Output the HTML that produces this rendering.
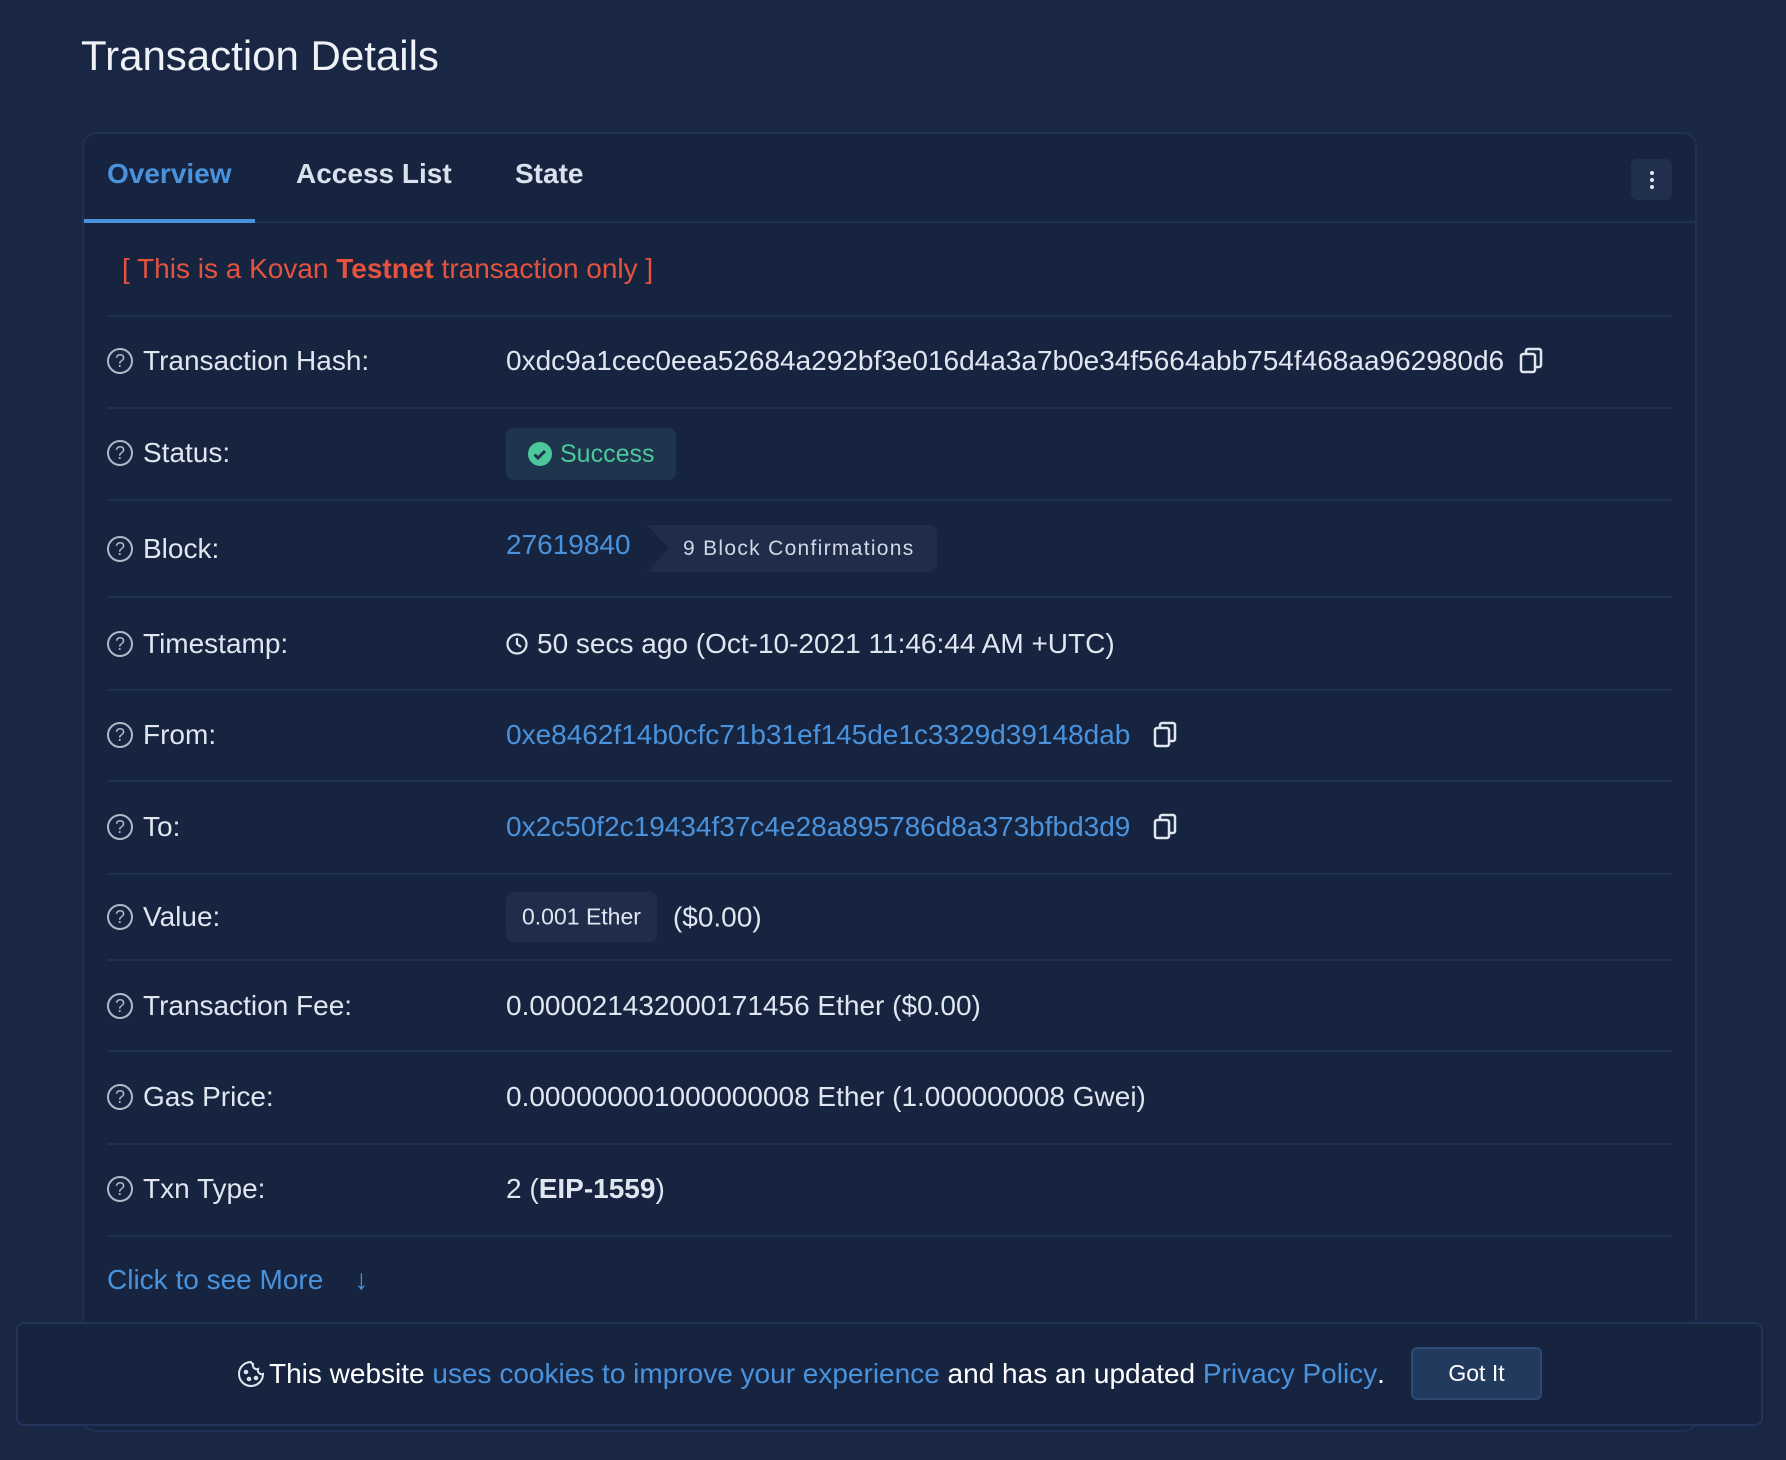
<!DOCTYPE html>
<html><head><meta charset="utf-8"><style>
*{margin:0;padding:0;box-sizing:border-box}
body{width:1786px;height:1460px;background:#1a2744;font-family:"Liberation Sans",sans-serif;color:#dfe6ef;position:relative;overflow:hidden}
.a{position:absolute;white-space:nowrap}
h1{position:absolute;left:81px;top:32px;font-size:42px;font-weight:400;color:#eef2f7}
.card{position:absolute;left:82px;top:132px;width:1615px;height:1300px;background:#162440;border:2px solid #1f3152;border-radius:14px}
.tab{position:absolute;top:158px;font-size:28px;font-weight:700;color:#d8e1ec}
.sep{position:absolute;left:107px;width:1565px;height:2px;background:#1f3152}
.lbl{position:absolute;left:107px;font-size:28px;color:#dfe6ef;display:flex;align-items:center;transform:translateY(-50%)}
.q{width:26px;height:26px;border:2px solid #aeb9c8;border-radius:50%;font-size:18px;line-height:22px;text-align:center;color:#aeb9c8;margin-right:10px}
.val{position:absolute;left:506px;font-size:28px;transform:translateY(-50%);display:flex;align-items:center}
.lk{color:#4a93dc}
.badge{background:#1f2f4d;border-radius:8px}
.cp{margin-left:14px}
</style></head><body>
<h1>Transaction Details</h1>
<div class="card"></div>
<div class="tab" style="left:107px;color:#4a93dc">Overview</div>
<div class="tab" style="left:296px">Access List</div>
<div class="tab" style="left:515px">State</div>
<div class="a" style="left:84px;top:221px;width:1611px;height:2px;background:#1f3152"></div>
<div class="a" style="left:84px;top:219px;width:171px;height:4px;background:#4a93dc"></div>
<div class="a" style="left:1631px;top:159px;width:41px;height:41px;background:#1f2f4d;border-radius:6px;display:flex;flex-direction:column;align-items:center;justify-content:center;gap:3px"><i style="width:4px;height:4px;background:#dfe6ef;border-radius:50%"></i><i style="width:4px;height:4px;background:#dfe6ef;border-radius:50%"></i><i style="width:4px;height:4px;background:#dfe6ef;border-radius:50%"></i></div>
<div class="a" style="left:122px;top:253px;font-size:28px;color:#e5533f">[ This is a Kovan <b>Testnet</b> transaction only ]</div>
<div class="sep" style="top:315px"></div><div class="sep" style="top:407px"></div><div class="sep" style="top:499px"></div><div class="sep" style="top:596px"></div><div class="sep" style="top:689px"></div><div class="sep" style="top:780px"></div><div class="sep" style="top:873px"></div><div class="sep" style="top:959px"></div><div class="sep" style="top:1050px"></div><div class="sep" style="top:1143px"></div><div class="sep" style="top:1235px"></div>

<div class="lbl" style="top:361px"><span class="q">?</span>Transaction Hash:</div>
<div class="val" style="top:361px">0xdc9a1cec0eea52684a292bf3e016d4a3a7b0e34f5664abb754f468aa962980d6<svg class="cp" width="26" height="28" viewBox="0 0 26 28" fill="none" stroke="#dfe6ef" stroke-width="2.5"><rect x="3" y="7" width="14" height="18" rx="2"/><path d="M8 7V4a2 2 0 0 1 2-2h11a2 2 0 0 1 2 2v14a2 2 0 0 1-2 2h-4"/></svg></div>

<div class="lbl" style="top:453px"><span class="q">?</span>Status:</div>
<div class="val badge" style="top:454px;height:52px;padding:0 22px;background:#1f344d;color:#4cc99a;font-size:25px"><svg width="24" height="24" viewBox="0 0 24 24" style="margin-right:8px"><circle cx="12" cy="12" r="12" fill="#4cc99a"/><path d="M6.5 12.5l3.5 3.5 7-7" stroke="#1f344d" stroke-width="3" fill="none"/></svg>Success</div>

<div class="lbl" style="top:549px"><span class="q">?</span>Block:</div>
<div class="val lk" style="top:545px">27619840</div>
<div class="a" style="left:647px;top:525px;width:290px;height:47px;background:#1f2d4a;border-radius:0 8px 8px 0;clip-path:polygon(0 0,100% 0,100% 100%,0 100%,22px 50%);font-size:21px;letter-spacing:1.3px;color:#cfd8e4;line-height:47px;padding-left:36px">9 Block Confirmations</div>

<div class="lbl" style="top:644px"><span class="q">?</span>Timestamp:</div>
<div class="val" style="top:644px"><svg width="22" height="22" viewBox="0 0 22 22" fill="none" stroke="#dfe6ef" stroke-width="2.2" style="margin-right:9px"><circle cx="11" cy="11" r="9.5"/><path d="M11 5v6l4 3"/></svg>50 secs ago (Oct-10-2021 11:46:44 AM +UTC)</div>

<div class="lbl" style="top:735px"><span class="q">?</span>From:</div>
<div class="val" style="top:735px"><span class="lk">0xe8462f14b0cfc71b31ef145de1c3329d39148dab</span><svg class="cp" style="margin-left:22px" width="26" height="28" viewBox="0 0 26 28" fill="none" stroke="#dfe6ef" stroke-width="2.5"><rect x="3" y="7" width="14" height="18" rx="2"/><path d="M8 7V4a2 2 0 0 1 2-2h11a2 2 0 0 1 2 2v14a2 2 0 0 1-2 2h-4"/></svg></div>

<div class="lbl" style="top:827px"><span class="q">?</span>To:</div>
<div class="val" style="top:827px"><span class="lk">0x2c50f2c19434f37c4e28a895786d8a373bfbd3d9</span><svg class="cp" style="margin-left:22px" width="26" height="28" viewBox="0 0 26 28" fill="none" stroke="#dfe6ef" stroke-width="2.5"><rect x="3" y="7" width="14" height="18" rx="2"/><path d="M8 7V4a2 2 0 0 1 2-2h11a2 2 0 0 1 2 2v14a2 2 0 0 1-2 2h-4"/></svg></div>

<div class="lbl" style="top:917px"><span class="q">?</span>Value:</div>
<div class="val" style="top:917px"><span class="badge" style="font-size:23px;padding:12px 16px;margin-right:16px;background:#1f2d4a">0.001 Ether</span>($0.00)</div>

<div class="lbl" style="top:1006px"><span class="q">?</span>Transaction Fee:</div>
<div class="val" style="top:1006px">0.000021432000171456 Ether ($0.00)</div>

<div class="lbl" style="top:1097px"><span class="q">?</span>Gas Price:</div>
<div class="val" style="top:1097px">0.000000001000000008 Ether (1.000000008 Gwei)</div>

<div class="lbl" style="top:1189px"><span class="q">?</span>Txn Type:</div>
<div class="val" style="top:1189px">2 (<b>EIP-1559</b>)</div>

<div class="a lk" style="left:107px;top:1264px;font-size:28px">Click to see More &nbsp;&nbsp;&nbsp;↓</div>

<div class="a" style="left:16px;top:1322px;width:1747px;height:104px;background:#162440;border:2px solid #22345a;border-radius:8px"></div>
<div class="a" style="left:237px;top:1358px;font-size:28px;color:#fff;display:flex;align-items:center"><svg width="28" height="28" viewBox="0 0 28 28" fill="none" stroke="#dfe6ef" stroke-width="2" style="margin-right:4px"><path d="M14 2a12 12 0 1 0 12 12 4 4 0 0 1-5-5 4 4 0 0 1-5-5 3 3 0 0 1-2-2z"/><circle cx="9" cy="12" r="1.3"/><circle cx="12" cy="19" r="1.3"/><circle cx="19" cy="18" r="1.3"/></svg>This website&nbsp;<span class="lk">uses cookies to improve your experience</span>&nbsp;and has an updated&nbsp;<span class="lk">Privacy Policy</span>.</div>
<div class="a" style="left:1411px;top:1347px;width:131px;height:53px;background:#213a5e;border:2px solid #2c4a72;border-radius:6px;font-size:23px;color:#fff;text-align:center;line-height:49px">Got It</div>
</body></html>
